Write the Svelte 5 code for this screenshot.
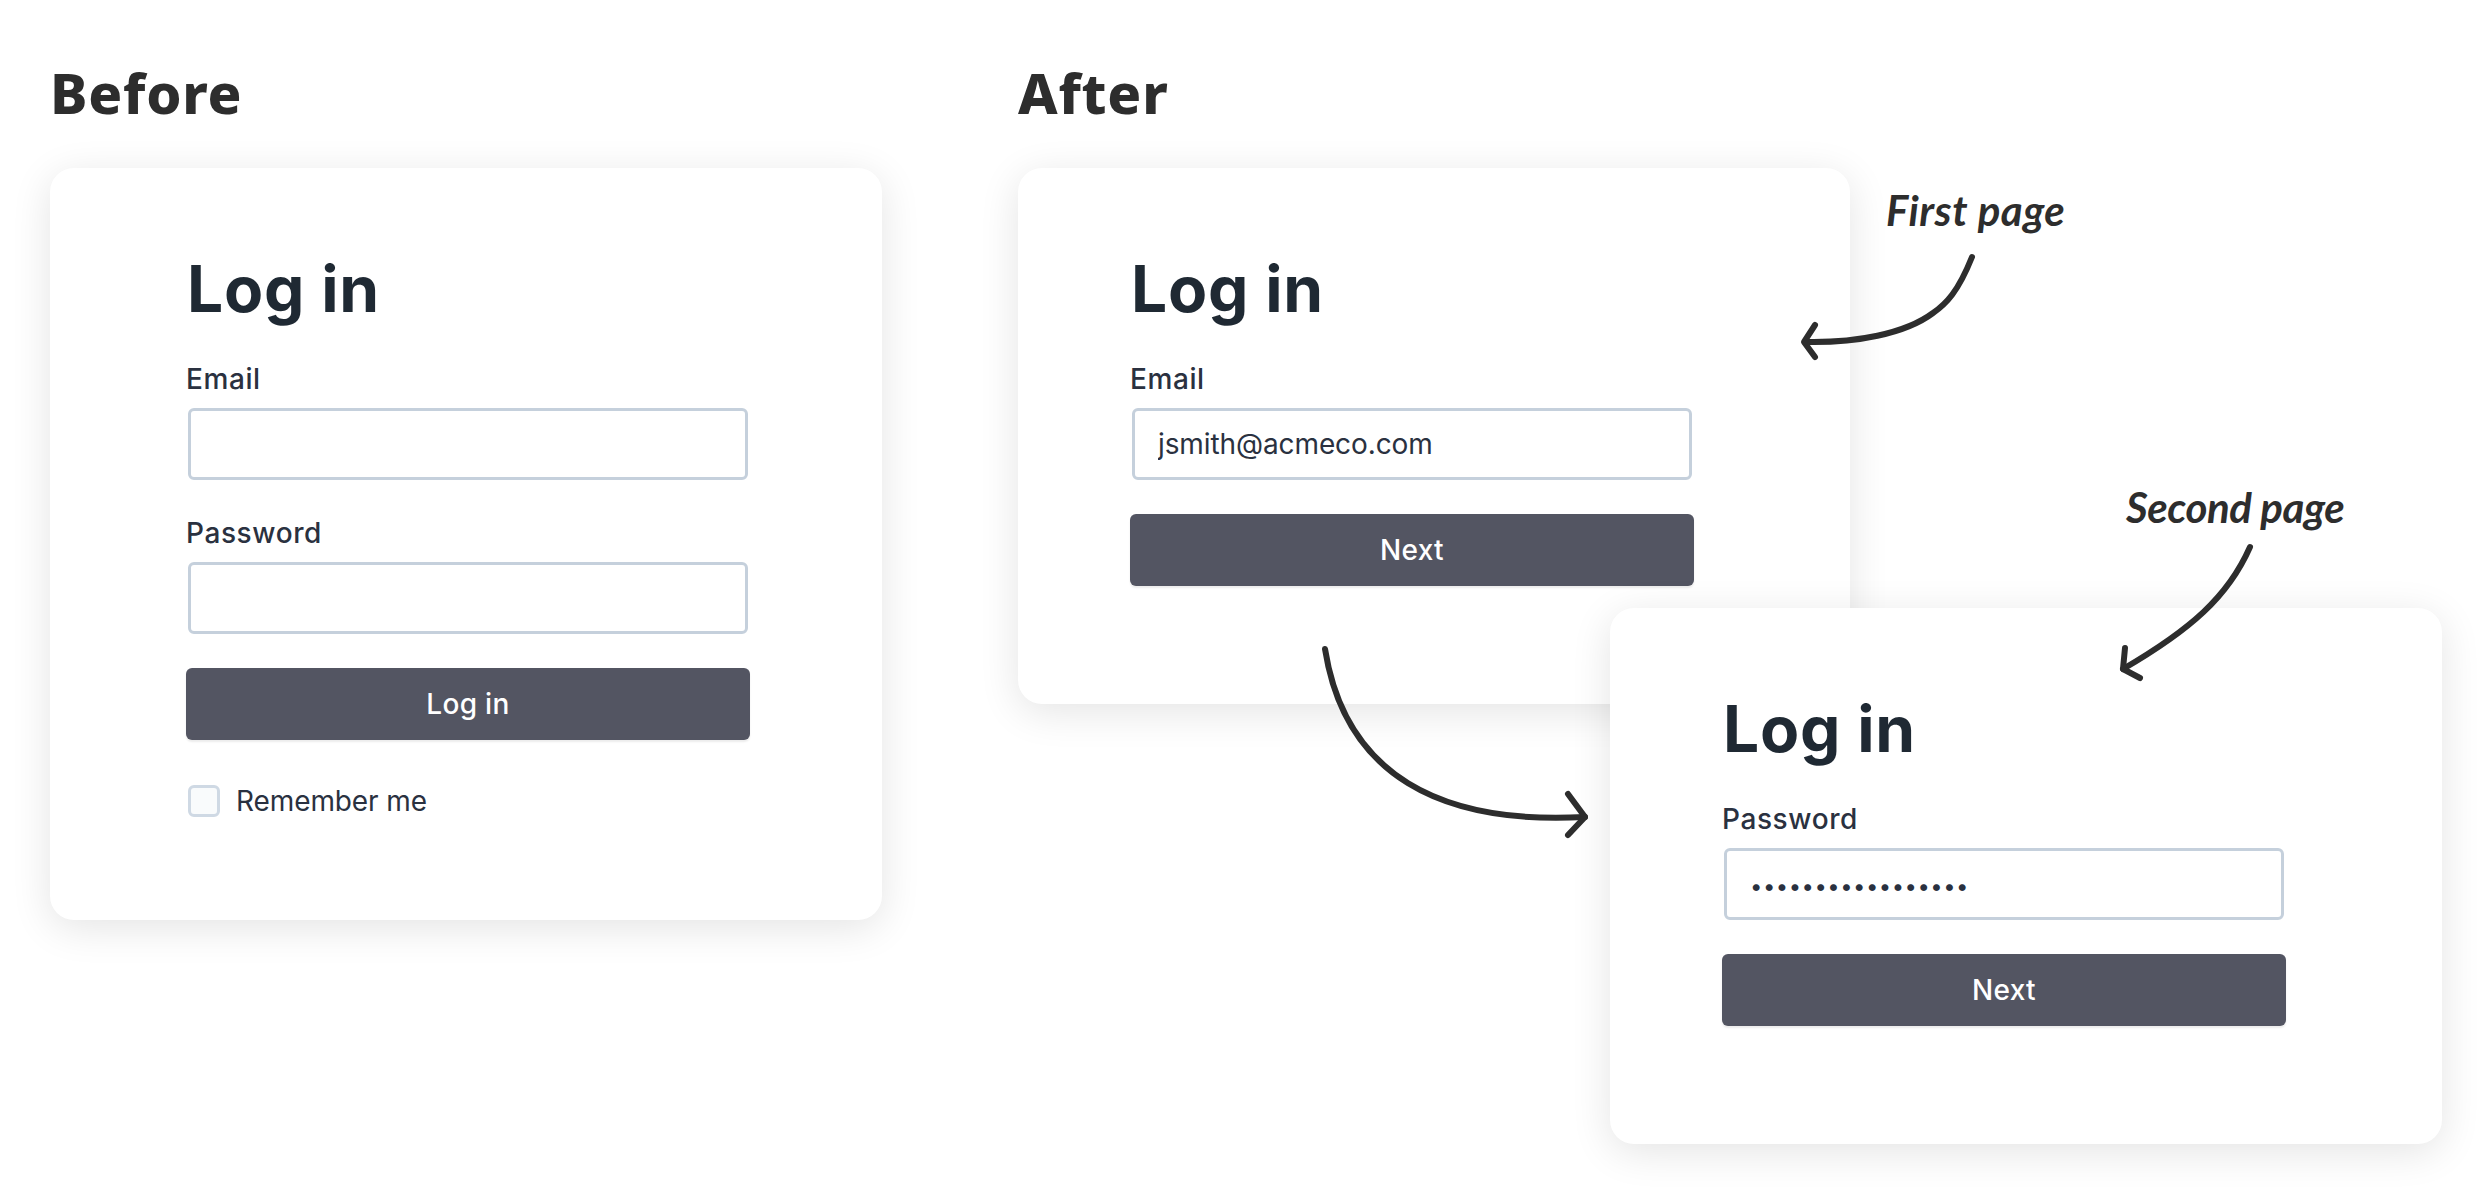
<script>
  const email = 'jsmith@acmeco.com';
  const password = '•'.repeat(17);
</script>

{#snippet field(label, value = '', dots = false)}
  <label class="field">
    <span class="label">{label}</span>
    <input class="input" class:dots type="text" {value} readonly />
  </label>
{/snippet}

<main class="page">
  <section class="column">
    <h1 class="heading">Before</h1>
    <div class="card before">
      <h2 class="title">Log in</h2>
      {@render field('Email')}
      {@render field('Password')}
      <button class="submit">Log in</button>
      <label class="remember">
        <span class="box"></span>
        <span>Remember me</span>
      </label>
    </div>
  </section>

  <section class="column after">
    <h1 class="heading">After</h1>
    <div class="stage">
      <div class="card step">
        <h2 class="title">Log in</h2>
        {@render field('Email', email)}
        <button class="submit">Next</button>
      </div>
      <div class="card step second">
        <h2 class="title">Log in</h2>
        {@render field('Password', password, true)}
        <button class="submit">Next</button>
      </div>
    </div>
  </section>

  <span class="note first">First page</span>
  <span class="note other">Second page</span>

  <svg class="arrows" viewBox="0 0 2492 1194" width="2492" height="1194" fill="none" aria-hidden="true">
    <path d="M1972 257C1958 292 1946 304 1933 313C1905 334 1855 343 1806 342" />
    <path d="M1815 325L1804 342L1815 357" />
    <path d="M2250 547C2228 597 2190 630 2123 669" />
    <path d="M2125 648L2123 669L2140 678" />
    <path d="M1325 649C1345 775 1440 825 1585 817" />
    <path d="M1568 794L1585 817L1568 835" />
  </svg>
</main>

<style>
  :global(body) {
    background: #fff;
  }

  .page {
    position: relative;
    display: flex;
    gap: 136px;
    width: 2492px;
    height: 1194px;
    padding-left: 50px;
    box-sizing: border-box;
    overflow: hidden;
    font-family: Inter, "Liberation Sans", sans-serif;
    color: #2a3140;
  }

  .column {
    width: 832px;
  }

  .heading {
    margin: 0;
    height: 168px;
    padding-top: 54px;
    box-sizing: border-box;
    font-family: "Noto Sans", "Open Sans", sans-serif;
    font-size: 56px;
    line-height: 76px;
    font-weight: 800;
    letter-spacing: 0.8px;
    color: #2d2d2d;
  }

  .stage {
    position: relative;
  }

  .card {
    display: flex;
    flex-direction: column;
    align-items: flex-start;
    box-sizing: border-box;
    background: #fff;
    border-radius: 24px;
    box-shadow: 0 8px 40px rgba(0, 0, 0, 0.11);
  }

  .before {
    height: 752px;
    padding: 83px 0 0 136px;
  }

  .step {
    height: 536px;
    padding: 83px 0 0 112px;
  }

  .second {
    position: absolute;
    left: 592px;
    top: 440px;
    width: 832px;
  }

  .title {
    margin: 0 0 0 1px;
    font-size: 64px;
    line-height: 76px;
    font-weight: 700;
    letter-spacing: 0.8px;
    color: #1f2933;
  }

  .field {
    display: flex;
    flex-direction: column;
    margin-top: 33px;
  }

  .field + .field {
    margin-top: 34px;
  }

  .label {
    height: 48px;
    font-size: 28px;
    line-height: 38px;
    font-weight: 500;
    letter-spacing: 0.6px;
  }

  .input {
    width: 560px;
    height: 72px;
    margin: 0 2px;
    padding: 0 23px;
    box-sizing: border-box;
    border: 3px solid #c5d0dc;
    border-radius: 6px;
    outline: none;
    background: #fff;
    font-family: inherit;
    font-size: 28px;
    letter-spacing: -0.1px;
    color: #2a3140;
  }

  .dots {
    padding-top: 3px;
    padding-left: 23px;
    font-size: 22px;
    letter-spacing: 0.5px;
  }

  .submit {
    width: 564px;
    height: 72px;
    margin-top: 34px;
    border: 0;
    border-radius: 6px;
    background: #535562;
    box-shadow: 0 2px 2px rgba(0, 0, 0, 0.08);
    font-family: inherit;
    font-size: 28px;
    font-weight: 500;
    letter-spacing: 0.3px;
    color: #fff;
  }

  .remember {
    display: flex;
    align-items: center;
    gap: 16px;
    margin: 44px 0 0 2px;
    font-size: 28px;
    letter-spacing: -0.1px;
  }

  .box {
    width: 32px;
    height: 32px;
    box-sizing: border-box;
    border: 3px solid #cfd9e4;
    border-radius: 6px;
    background: #f9fbfc;
  }

  .note {
    position: absolute;
    font-family: Lato, "Open Sans", sans-serif;
    font-size: 42px;
    line-height: 48px;
    font-weight: 700;
    font-style: italic;
    letter-spacing: 0.5px;
    color: #2d2d2d;
  }

  .first {
    left: 1886px;
    top: 186px;
  }

  .other {
    left: 2126px;
    top: 483px;
    letter-spacing: -0.4px;
  }

  .arrows {
    position: absolute;
    left: 0;
    top: 0;
    pointer-events: none;
  }

  .arrows path {
    stroke: #2d2d2d;
    stroke-width: 6;
    stroke-linecap: round;
    stroke-linejoin: round;
  }
</style>
